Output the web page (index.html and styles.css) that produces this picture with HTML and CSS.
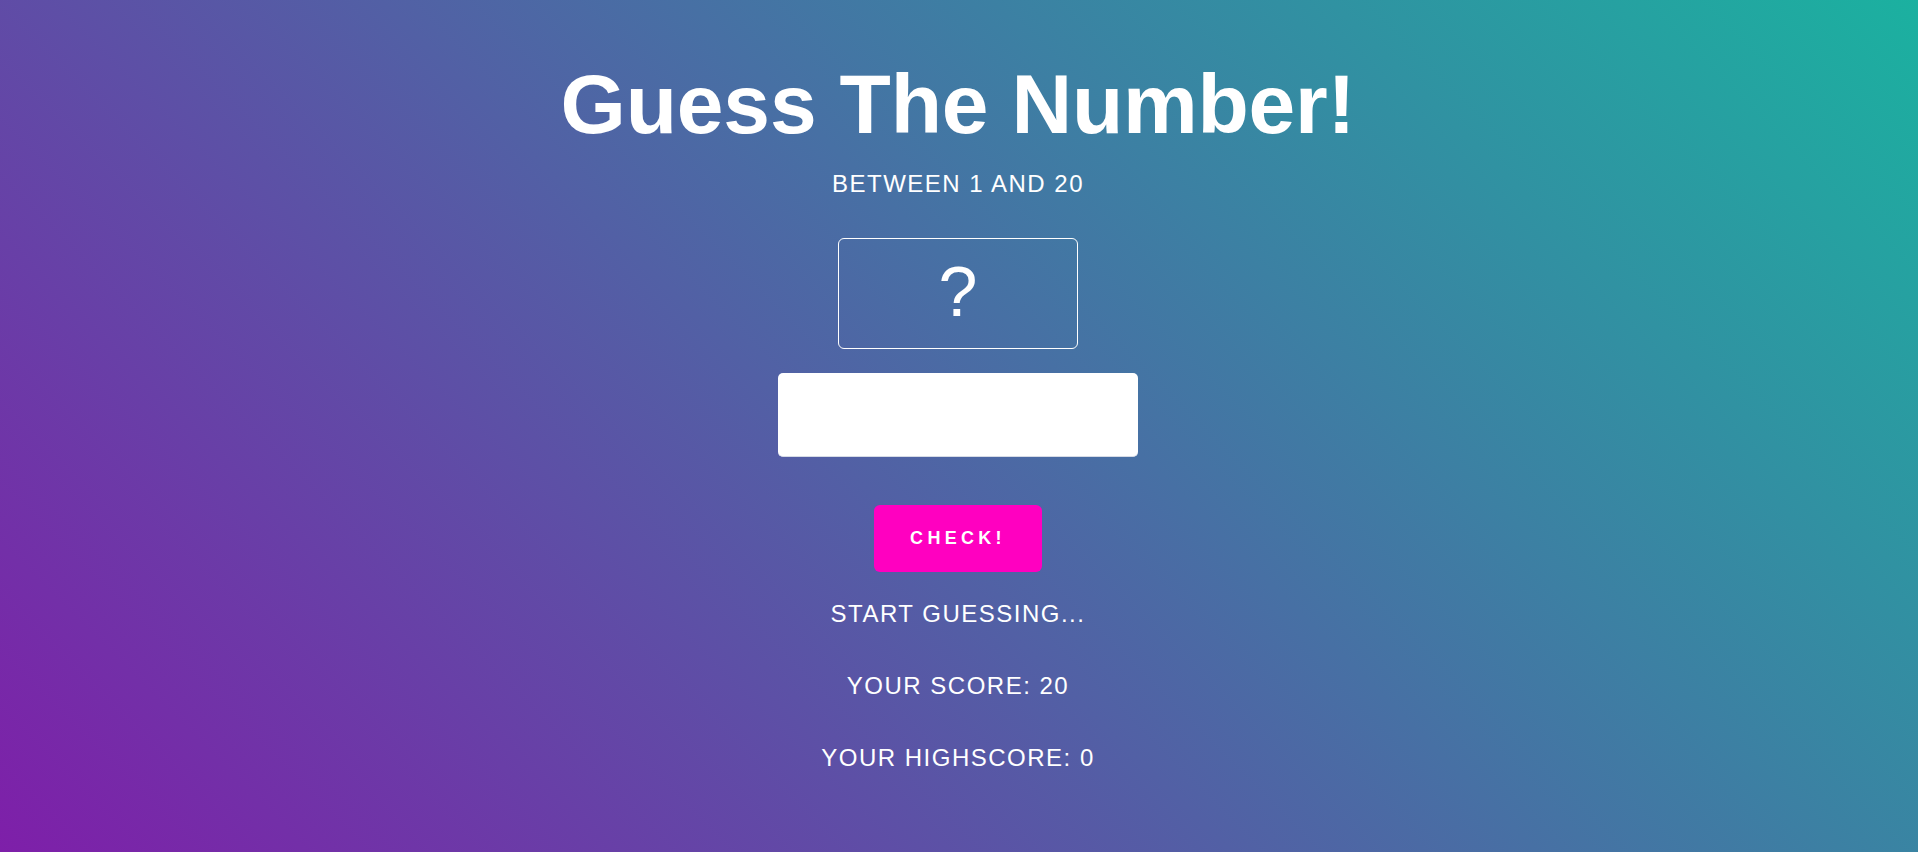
FILE: index.html
```html
<!DOCTYPE html>
<html lang="en">
<head>
<meta charset="utf-8">
<title>Guess The Number!</title>
<link rel="stylesheet" href="styles.css">
</head>
<body>
<main class="game">
  <h1 class="title">Guess The Number!</h1>
  <p class="range">Between 1 and 20</p>
  <div class="secret">?</div>
  <input class="guess" type="number" aria-label="Your guess">
  <button class="check">Check!</button>
  <p class="message">Start guessing...</p>
  <p class="stat">Your score: <span>20</span></p>
  <p class="stat">Your highscore: <span>0</span></p>
</main>
</body>
</html>
```

FILE: styles.css
```css
* {
  box-sizing: border-box;
}

html,
body {
  height: 100%;
  margin: 0;
}

body {
  background: linear-gradient(45deg, #7e1fa9 0%, #1bb1a0 100%);
  color: #ffffff;
  font-family: "Liberation Sans", Arial, sans-serif;
  overflow: hidden;
}

.game {
  display: flex;
  flex-direction: column;
  align-items: center;
  padding-top: 62px;
  padding-right: 2px;
}

.title {
  margin: 0;
  font-size: 84px;
  line-height: 84px;
  font-weight: 700;
  letter-spacing: -0.2px;
}

.range,
.message,
.stat {
  margin: 0;
  font-size: 24px;
  line-height: 28px;
  text-transform: uppercase;
  letter-spacing: 1.5px;
}

.range {
  margin-top: 24px;
}

.secret {
  margin-top: 40px;
  width: 240px;
  height: 111px;
  border: 1px solid #ffffff;
  border-radius: 6px;
  display: flex;
  align-items: center;
  justify-content: center;
  font-size: 70px;
  line-height: 70px;
  padding-bottom: 4px;
}

.guess {
  margin-top: 24px;
  width: 360px;
  height: 84px;
  border: none;
  border-bottom: 1px solid #d6dbe6;
  border-radius: 5px;
  background: #ffffff;
  font-family: inherit;
  font-size: 40px;
  text-align: center;
  outline: none;
}

.check {
  margin-top: 48px;
  width: 168px;
  height: 67px;
  border: none;
  border-radius: 6px;
  background: #ff00c0;
  color: #ffffff;
  font-family: inherit;
  font-size: 18px;
  font-weight: 700;
  letter-spacing: 4.3px;
  text-transform: uppercase;
  padding: 0;
  cursor: pointer;
}

.message {
  margin-top: 28px;
}

.stat {
  margin-top: 44px;
}
```
